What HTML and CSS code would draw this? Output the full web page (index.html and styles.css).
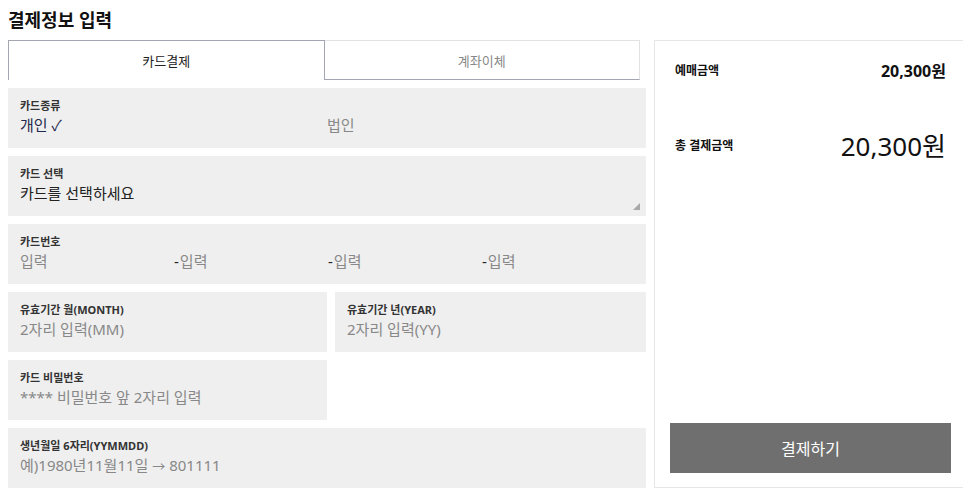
FILE: index.html
```html
<!DOCTYPE html>
<html lang="ko">

<head>
    <meta charset="UTF-8">
    <meta name="viewport" content="width=device-width, initial-scale=1.0">
    <title>결제정보 입력</title>
    <link rel="stylesheet" href="styles.css">
</head>

<body>
    <h2 class="title">결제정보 입력</h2>
    <div class="wrap">
        <div class="form">
            <div class="tabs">
                <button class="tab active">카드결제</button>
                <button class="tab">계좌이체</button>
            </div>

            <div class="field">
                <p class="label">카드종류</p>
                <div class="cols2">
                    <span class="val on">개인 ✓</span>
                    <span class="val">법인</span>
                </div>
            </div>

            <div class="field select">
                <p class="label">카드 선택</p>
                <span class="val dark">카드를 선택하세요</span>
                <span class="grip"></span>
            </div>

            <div class="field">
                <p class="label">카드번호</p>
                <div class="cols4">
                    <span class="val">입력</span>
                    <span class="val"><i class="dash">-</i>입력</span>
                    <span class="val"><i class="dash">-</i>입력</span>
                    <span class="val"><i class="dash">-</i>입력</span>
                </div>
            </div>

            <div class="row">
                <div class="field half">
                    <p class="label">유효기간 월(MONTH)</p>
                    <span class="val">2자리 입력(MM)</span>
                </div>
                <div class="field half">
                    <p class="label">유효기간 년(YEAR)</p>
                    <span class="val">2자리 입력(YY)</span>
                </div>
            </div>

            <div class="row">
                <div class="field half">
                    <p class="label">카드 비밀번호</p>
                    <span class="val">**** 비밀번호 앞 2자리 입력</span>
                </div>
            </div>

            <div class="field">
                <p class="label">생년월일 6자리(YYMMDD)</p>
                <span class="val">예)1980년11월11일 <i class="arrow">→</i> 801111</span>
            </div>
        </div>

        <div class="summary">
            <div class="sum-row">
                <span class="sum-label">예매금액</span>
                <span class="sum-price">20,300원</span>
            </div>
            <div class="sum-row total">
                <span class="sum-label">총 결제금액</span>
                <span class="sum-total">20,300원</span>
            </div>
            <button class="pay-btn">결제하기</button>
        </div>
    </div>
</body>

</html>
```

FILE: styles.css
```css
*{
    margin: 0;
    padding: 0;
    box-sizing: border-box;
}
body{
    margin: 8px;
    font-family: "Noto Sans", "Noto Sans CJK KR", sans-serif;
    color: #222;
    background-color: #fff;
}
.title{
    font-size: 18px;
    line-height: 24px;
    font-weight: 700;
    margin-bottom: 8px;
    color: #111;
}
.wrap{
    display: flex;
    gap: 8px;
}
.form{
    width: 638px;
    flex-shrink: 0;
    display: flex;
    flex-direction: column;
    gap: 8px;
}
.tabs{
    display: flex;
    width: 632px;
    height: 40px;
}
.tab{
    flex: 1;
    background: #fff;
    font-family: inherit;
    font-size: 13px;
    color: #888;
    border: 1px solid #e2e2e4;
    border-bottom-color: #a3a5b0;
    border-left: none;
}
.tab.active{
    color: #222;
    border: 1px solid #a3a5b0;
    border-bottom: none;
}
.field{
    position: relative;
    background-color: #efefef;
    height: 60px;
    padding: 10px 12px 0;
}
.label{
    font-size: 11px;
    line-height: 16px;
    font-weight: 700;
    color: #333;
}
.val{
    display: block;
    font-size: 15px;
    line-height: 22px;
    color: #888;
}
.val.on{
    color: #1f2a4d;
}
.val.dark{
    color: #222;
}
.arrow{
    font-style: normal;
    font-size: 13px;
}
.cols2{
    display: grid;
    grid-template-columns: 307px 1fr;
}
.cols4{
    display: grid;
    grid-template-columns: repeat(4, 154px);
}
.dash{
    font-style: normal;
    color: #222;
    margin-right: 1px;
}
.grip{
    position: absolute;
    right: 6px;
    bottom: 6px;
    width: 0;
    height: 0;
    border-left: 7px solid transparent;
    border-bottom: 7px solid #a8a8a8;
}
.row{
    display: flex;
    gap: 8px;
}
.half{
    width: 319px;
}
.row .half + .half{
    width: 311px;
}
.summary{
    width: 313px;
    height: 448px;
    flex-shrink: 0;
    border: 1px solid #e6e6e6;
    padding: 15px 15px 14px;
    display: flex;
    flex-direction: column;
}
.sum-row{
    display: flex;
    justify-content: space-between;
    align-items: center;
    height: 28px;
    padding: 0 5px 0 5px;
}
.sum-row.total{
    height: 40px;
    margin-top: 41px;
}
.sum-label{
    font-size: 12px;
    font-weight: 700;
    color: #111;
}
.sum-price{
    font-size: 16px;
    font-weight: 700;
    color: #111;
}
.sum-total{
    font-size: 26px;
    font-weight: 400;
    color: #111;
}
.pay-btn{
    margin-top: auto;
    height: 50px;
    border: none;
    background-color: #6f6f6f;
    color: #fff;
    font-family: inherit;
    font-size: 16px;
}
```
